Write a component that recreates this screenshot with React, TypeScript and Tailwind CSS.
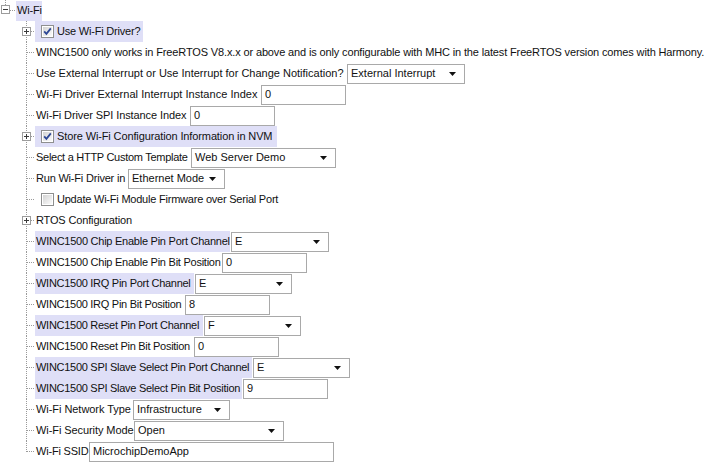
import { FC } from "react";

type Field = { kind: "text" | "select"; value: string; w: number };

interface IRow {
  label: string;
  w: number; // width of the label cell, taken from the reference
  ls?: number; // letter spacing so the text fills that cell
  hl?: boolean;
  expander?: boolean;
  check?: boolean;
  field?: Field;
  last?: boolean;
}

const rows: IRow[] = [
  { label: "Use Wi-Fi Driver?", w: 108, ls: -0.2, hl: true, expander: true, check: true },
  {
    label:
      "WINC1500 only works in FreeRTOS V8.x.x or above and is only configurable with MHC in the latest FreeRTOS version comes with Harmony.",
    w: 673,
    ls: -0.14,
  },
  {
    label: "Use External Interrupt or Use Interrupt for Change Notification?",
    w: 311,
    ls: 0,
    field: { kind: "select", value: "External Interrupt", w: 118 },
  },
  {
    label: "Wi-Fi Driver External Interrupt Instance Index",
    w: 225,
    ls: 0.03,
    field: { kind: "text", value: "0", w: 85 },
  },
  {
    label: "Wi-Fi Driver SPI Instance Index",
    w: 154,
    ls: -0.1,
    field: { kind: "text", value: "0", w: 85 },
  },
  {
    label: "Store Wi-Fi Configuration Information in NVM",
    w: 242,
    ls: -0.12,
    hl: true,
    expander: true,
    check: true,
  },
  {
    label: "Select a HTTP Custom Template",
    w: 155,
    ls: -0.28,
    field: { kind: "select", value: "Web Server Demo", w: 145 },
  },
  {
    label: "Run Wi-Fi Driver in",
    w: 92,
    ls: -0.2,
    field: { kind: "select", value: "Ethernet Mode", w: 97 },
  },
  { label: "Update Wi-Fi Module Firmware over Serial Port", w: 246, ls: -0.22, check: false },
  { label: "RTOS Configuration", w: 97, ls: -0.15, expander: true },
  {
    label: "WINC1500 Chip Enable Pin Port Channel",
    w: 195,
    ls: -0.25,
    hl: true,
    field: { kind: "select", value: "E", w: 98 },
  },
  {
    label: "WINC1500 Chip Enable Pin Bit Position",
    w: 186,
    ls: -0.25,
    field: { kind: "text", value: "0", w: 85 },
  },
  {
    label: "WINC1500 IRQ Pin Port Channel",
    w: 159,
    ls: -0.28,
    hl: true,
    field: { kind: "select", value: "E", w: 97 },
  },
  {
    label: "WINC1500 IRQ Pin Bit Position",
    w: 149,
    ls: -0.28,
    field: { kind: "text", value: "8", w: 85 },
  },
  {
    label: "WINC1500 Reset Pin Port Channel",
    w: 168,
    ls: -0.28,
    hl: true,
    field: { kind: "select", value: "F", w: 97 },
  },
  {
    label: "WINC1500 Reset Pin Bit Position",
    w: 158,
    ls: -0.28,
    field: { kind: "text", value: "0", w: 85 },
  },
  {
    label: "WINC1500 SPI Slave Select Pin Port Channel",
    w: 217,
    ls: -0.28,
    hl: true,
    field: { kind: "select", value: "E", w: 97 },
  },
  {
    label: "WINC1500 SPI Slave Select Pin Bit Position",
    w: 207,
    ls: -0.28,
    hl: true,
    field: { kind: "text", value: "9", w: 85 },
  },
  {
    label: "Wi-Fi Network Type",
    w: 97,
    ls: -0.05,
    field: { kind: "select", value: "Infrastructure", w: 97 },
  },
  {
    label: "Wi-Fi Security Mode",
    w: 98,
    ls: -0.08,
    field: { kind: "select", value: "Open", w: 150 },
  },
  {
    label: "Wi-Fi SSID",
    w: 53,
    ls: -0.2,
    field: { kind: "text", value: "MicrochipDemoApp", w: 245 },
    last: true,
  },
];

const DOT = "#9a9a9a";

const ExpanderBox: FC<{ x: number; y: number; open?: boolean }> = ({ x, y, open }) => (
  <g>
    <rect x={x + 0.5} y={y + 0.5} width={8} height={8} fill="#fff" stroke="#9c9c9c" />
    <line x1={x + 2} y1={y + 4.5} x2={x + 7} y2={y + 4.5} stroke="#3b3b3b" />
    {!open && <line x1={x + 4.5} y1={y + 2} x2={x + 4.5} y2={y + 7} stroke="#3b3b3b" />}
  </g>
);

const Guide: FC<{ expander?: boolean; last?: boolean }> = ({ expander, last }) => (
  <svg width={35} height={21} className="shrink-0">
    <line x1={26.5} y1={0} x2={26.5} y2={last ? 11 : 21} stroke={DOT} strokeDasharray="1 1" />
    <line x1={27} y1={10.5} x2={35} y2={10.5} stroke={DOT} strokeDasharray="1 1" />
    {expander && <ExpanderBox x={22} y={6} />}
  </svg>
);

const CheckBox: FC<{ checked: boolean }> = ({ checked }) => (
  <svg width={13} height={13} className="shrink-0">
    <defs>
      <linearGradient id={checked ? "cbOn" : "cbOff"} x1="0" y1="0" x2="1" y2="1">
        <stop offset="0" stopColor="#d3d3d3" />
        <stop offset="1" stopColor="#fbfbfb" />
      </linearGradient>
    </defs>
    <rect x={0.5} y={0.5} width={12} height={12} fill="#fff" stroke="#8e8f8f" />
    <rect x={2} y={2} width={9} height={9} fill={`url(#${checked ? "cbOn" : "cbOff"})`} />
    {checked && (
      <path d="M3.2 6.4 L5.4 8.8 L9.8 3.4" fill="none" stroke="#2d4795" strokeWidth={1.8} />
    )}
  </svg>
);

const Arrow = () => (
  <svg width={7} height={4} className="shrink-0">
    <path d="M0 0 H7 L3.5 4 Z" fill="#111" />
  </svg>
);

const Input: FC<{ field: Field }> = ({ field }) => (
  <div
    className="ml-px h-[20px] flex items-center justify-between border border-[#a9a9a9] bg-white pl-[3px] pr-[8px] shrink-0"
    style={{ width: field.w }}
  >
    <span className="whitespace-nowrap">{field.value}</span>
    {field.kind === "select" && <Arrow />}
  </div>
);

const Row: FC<{ row: IRow }> = ({ row }) => (
  <div className="flex h-[21px] items-center">
    <Guide expander={row.expander} last={row.last} />
    <div
      className={`flex h-full items-center shrink-0 ${row.hl ? "bg-[#dfdff7]" : ""}`}
      style={{ width: row.w }}
    >
      {row.check !== undefined && (
        <div className="pl-[6px] pr-[2px] flex items-center">
          <CheckBox checked={row.check} />
        </div>
      )}
      <span className="whitespace-nowrap pl-px" style={{ letterSpacing: row.ls }}>
        {row.label}
      </span>
    </div>
    {row.field && <Input field={row.field} />}
  </div>
);

export default function App() {
  return (
    <div className="w-[708px] h-[476px] overflow-hidden bg-white text-[11px] text-[#111] font-['Liberation_Sans',Arial,sans-serif]">
      <div className="flex h-[21px] items-center">
        <svg width={16} height={21} className="shrink-0">
          <line x1={5.5} y1={0} x2={5.5} y2={5} stroke={DOT} strokeDasharray="1 1" />
          <ExpanderBox x={1} y={5} open />
          <line x1={10} y1={10.5} x2={16} y2={10.5} stroke={DOT} strokeDasharray="1 1" />
        </svg>
        <div className="flex h-[20px] w-[26px] items-center bg-[#dfdff7] px-px">
          <span className="whitespace-nowrap tracking-[-0.2px]">Wi-Fi</span>
        </div>
      </div>
      {rows.map((row, key) => (
        <Row key={key} row={row} />
      ))}
    </div>
  );
}
